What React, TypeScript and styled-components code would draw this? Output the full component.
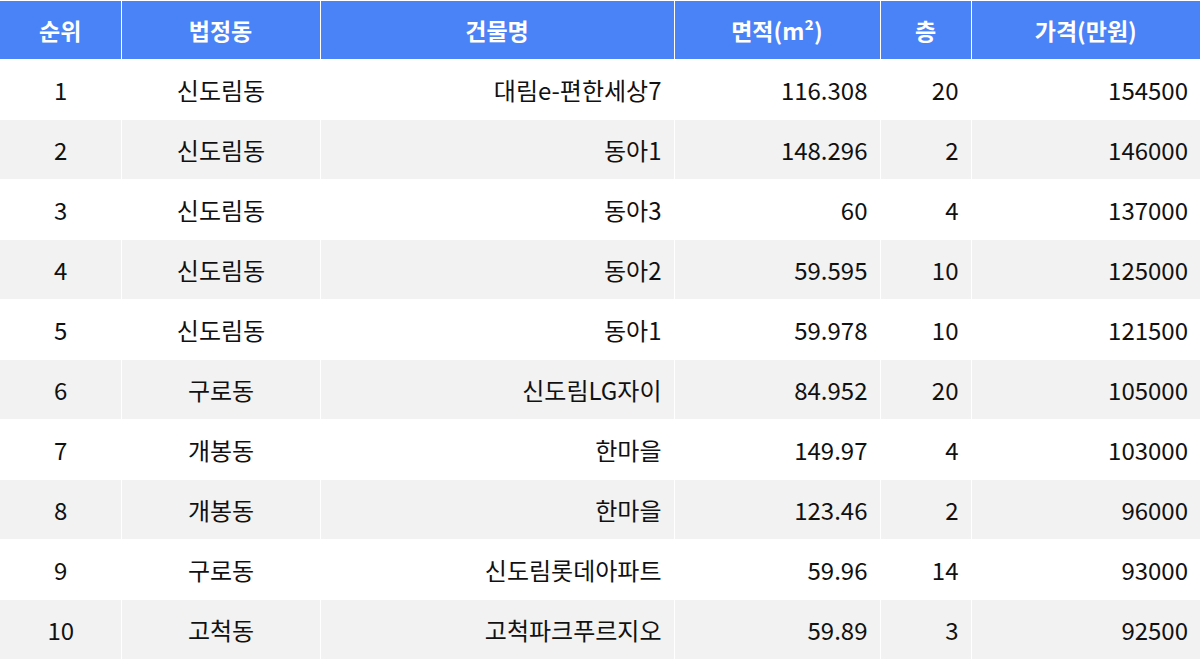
import React from 'react'
import styled, { createGlobalStyle } from 'styled-components'

const rows = [
  [1, '신도림동', '대림e-편한세상7', '116.308', 20, 154500],
  [2, '신도림동', '동아1', '148.296', 2, 146000],
  [3, '신도림동', '동아3', '60', 4, 137000],
  [4, '신도림동', '동아2', '59.595', 10, 125000],
  [5, '신도림동', '동아1', '59.978', 10, 121500],
  [6, '구로동', '신도림LG자이', '84.952', 20, 105000],
  [7, '개봉동', '한마을', '149.97', 4, 103000],
  [8, '개봉동', '한마을', '123.46', 2, 96000],
  [9, '구로동', '신도림롯데아파트', '59.96', 14, 93000],
  [10, '고척동', '고척파크푸르지오', '59.89', 3, 92500],
]

const widths = [121, 199, 354, 206, 91, 229]
const aligns = ['center', 'center', 'right', 'right', 'right', 'right']

const App = () => {
  return (
    <>
      <Global />
      <Table>
        <colgroup>
          {widths.map((w, i) => (
            <col key={i} style={{ width: w }} />
          ))}
        </colgroup>
        <thead>
          <tr>
            <Th>순위</Th>
            <Th>법정동</Th>
            <Th>건물명</Th>
            <Th>면적(m²)</Th>
            <Th>층</Th>
            <Th>가격(만원)</Th>
          </tr>
        </thead>
        <tbody>
          {rows.map((r, i) => (
            <Row key={i} striped={i % 2 === 1}>
              {r.map((c, j) => (
                <Td key={j} align={aligns[j]}>{c}</Td>
              ))}
            </Row>
          ))}
        </tbody>
      </Table>
    </>
  )
}

export default App

const Global = createGlobalStyle`
body {
  margin: 0;
  background: #fff;
  font-family: "Noto Sans CJK KR", "Noto Sans", sans-serif;
}
`

const Table = styled.table`
width: 1200px;
border-collapse: collapse;
table-layout: fixed;
border-top: 1px solid #fff;
`

const Th = styled.th`
height: 58px;
padding: 0;
background: #4a83f7;
color: #fff;
font-size: 23px;
font-weight: 700;
text-align: center;
border: 1px solid #fff;
&:first-child { border-left: none; }
&:last-child { border-right: none; }
`

const Row = styled.tr<{ striped: boolean }>`
background: ${({ striped }) => (striped ? '#f2f2f2' : '#fff')};
`

const Td = styled.td<{ align: string }>`
height: 59px;
padding: 0 12px 0 13px;
font-size: 24px;
color: #111;
text-align: ${({ align }) => align};
border: 1px solid #fff;
&:first-child { border-left: none; }
&:last-child { border-right: none; }
`
